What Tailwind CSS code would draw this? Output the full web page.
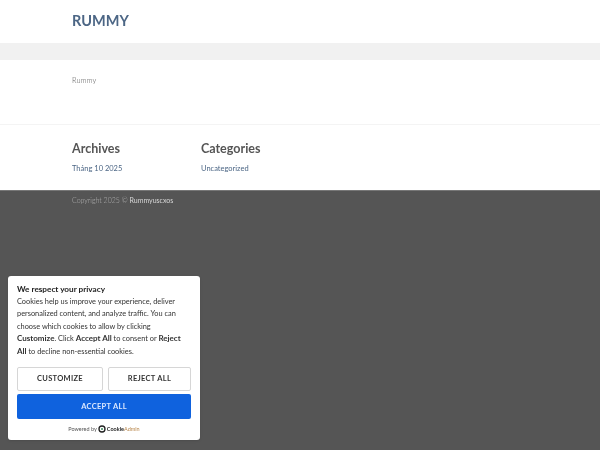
<!DOCTYPE html>
<html lang="en">
<head>
    <meta charset="UTF-8">
    <meta name="viewport" content="width=device-width, initial-scale=1.0">
    <title>Rummy</title>
    <script src="https://cdn.jsdelivr.net/npm/@tailwindcss/browser@4"></script>
</head>
<body class="font-['Lato',sans-serif] bg-[#555555] h-[450px] overflow-hidden">
  <div class="relative h-[450px] blur-[0.45px]">
    <header class="bg-white h-[43px] pl-[72px] flex items-center">
        <h1 class="text-[14.5px] font-bold text-[#4c6685] leading-none">RUMMY</h1>
    </header>
    <div class="h-[17px] bg-[#f1f1f1]"></div>
    <main class="bg-white h-[65px] pl-[72px] pt-[15px] border-b border-[#f4f4f4]">
        <p class="text-[7.5px] leading-[12px] font-light text-[#555555]">Rummy</p>
    </main>
    <section class="bg-white h-[65px] pl-[72px] pt-[15px] flex">
        <div class="w-[129px]">
            <h2 class="text-[12.5px] leading-[17px] font-bold text-[#555555]">Archives</h2>
            <a class="block mt-[6px] text-[7.5px] leading-[12px] text-[#4c6685]">Tháng 10 2025</a>
        </div>
        <div>
            <h2 class="text-[12.5px] leading-[17px] font-bold text-[#555555]">Categories</h2>
            <a class="block mt-[6px] text-[7.5px] leading-[12px] text-[#4c6685]">Uncategorized</a>
        </div>
    </section>
    <footer class="pl-[72px] pt-[3px] text-[7px] leading-[12px] text-[#b5b5b5] font-light border-t border-[#777777]">
        Copyright 2025 © <span class="text-[#d8d8d8] font-normal">Rummyuscxos</span>
    </footer>

    <!-- cookie banner sits over the footer -->
    <div class="absolute left-[8px] top-[276px] w-[192px] h-[164px] bg-white rounded-[3px] shadow-sm px-[9px] pt-[7px]">
        <p class="text-[8.2px] leading-[12px] font-bold text-[#212121]">We respect your privacy</p>
        <p class="mt-[0.5px] w-[170px] text-[7.4px] leading-[12.5px] text-[#333333]">
            Cookies help us improve your experience, deliver personalized content, and analyze traffic. You can choose which cookies to allow by clicking <b class="text-[8px] leading-none">Customize</b>. Click <b class="text-[8px] leading-none">Accept All</b> to consent or <b class="text-[8px] leading-none">Reject All</b> to decline non-essential cookies.
        </p>
        <div class="mt-[9px] grid grid-cols-[86px_83px] gap-[5px]">
            <button class="h-[24px] bg-white border border-[#d6d6d6] rounded-[2px] text-[7.5px] font-bold tracking-[0.3px] text-[#333333]">CUSTOMIZE</button>
            <button class="h-[24px] bg-white border border-[#d6d6d6] rounded-[2px] text-[7.5px] font-bold tracking-[0.3px] text-[#333333]">REJECT ALL</button>
        </div>
        <button class="mt-[2px] w-full h-[25px] bg-[#0f62de] rounded-[2px] text-[7.5px] font-bold tracking-[0.3px] text-[#dbe8ff]">ACCEPT ALL</button>
        <div class="mt-[6px] flex items-center justify-center gap-[1px] text-[5.5px] leading-[8px] text-[#555555]">
            <span>Powered by</span>
            <svg class="w-[8px] h-[8px]" viewBox="0 0 12 12"><circle cx="6" cy="6" r="4.5" fill="none" stroke="#222222" stroke-width="2"/><circle cx="6" cy="6" r="1.5" fill="#3a8a5c"/></svg>
            <span><b class="text-[#222222]">Cookie</b><span class="text-[#b8864a]">Admin</span></span>
        </div>
    </div>
  </div>
</body>
</html>
